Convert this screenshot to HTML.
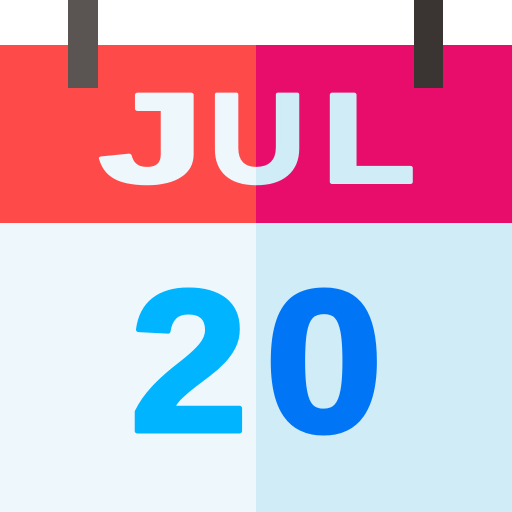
<!DOCTYPE html>
<html><head><meta charset="utf-8"><style>
html,body{margin:0;padding:0;background:#fff;}
svg{display:block}
</style></head><body>
<svg width="512" height="512" viewBox="0 0 512 512" xmlns="http://www.w3.org/2000/svg">
<defs>
<clipPath id="L"><rect x="0" y="0" width="256" height="512"/></clipPath>
<clipPath id="R"><rect x="256" y="0" width="256" height="512"/></clipPath>
<g id="jul" font-family="Liberation Sans, sans-serif" font-weight="bold" font-size="127" stroke-width="4" stroke-linejoin="round">
<text transform="translate(99,182) scale(1.48,1)">J</text>
<text transform="translate(209,182) scale(1.05,1)">U</text>
<text transform="translate(322,182) scale(1.2,1)">L</text>
</g>
</defs>
<rect x="0" y="45" width="256" height="178" fill="#FF4A4A"/>
<rect x="256" y="45" width="256" height="178" fill="#E80C6B"/>
<rect x="0" y="223" width="256" height="289" fill="#EEF7FC"/>
<rect x="256" y="223" width="256" height="289" fill="#CFECF7"/>
<rect x="68" y="0" width="30" height="88" fill="#5A5553"/>
<rect x="414" y="0" width="29" height="88" fill="#3A3432"/>
<g clip-path="url(#L)" fill="#EEF7FC" stroke="#EEF7FC"><use href="#jul"/></g>
<g clip-path="url(#R)" fill="#CFECF7" stroke="#CFECF7"><use href="#jul"/></g>
<g font-family="Liberation Sans, sans-serif" font-weight="bold" font-size="202" stroke-width="5" stroke-linejoin="round">
<text transform="translate(130,431) scale(1.05,1)" fill="#00B4FF" stroke="#00B4FF">2</text>
<text transform="translate(265,431) scale(1.05,1)" fill="#0076F6" stroke="#0076F6">0</text>
</g>
</svg>
</body></html>
